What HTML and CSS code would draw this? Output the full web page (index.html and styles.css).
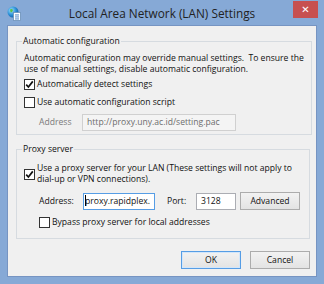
FILE: index.html
```html
<!DOCTYPE html>
<html>
<head>
<meta charset="utf-8">
<link rel="stylesheet" href="styles.css">
</head>
<body>
<div class="window">
  <div class="titlebar">
    <div class="tb-left">
      <svg class="appicon" width="14" height="15" viewBox="0 0 14 15">
        <defs>
          <radialGradient id="g" cx="0.35" cy="0.35" r="0.7">
            <stop offset="0" stop-color="#9fe0ff"/>
            <stop offset="0.6" stop-color="#2a8fd6"/>
            <stop offset="1" stop-color="#1560a8"/>
          </radialGradient>
        </defs>
        <circle cx="6" cy="6" r="5.5" fill="url(#g)"/>
        <path d="M3 3.5 Q5 2.5 6 4 Q5.5 6 4 6.5 Q3 5.5 3 3.5Z M7 7 Q9 6.5 9.5 8.5 Q8 10.5 6.5 10 Z" fill="#5cc04a"/>
        <rect x="6.5" y="6.5" width="7" height="8" fill="#ffffff" stroke="#6a8fb8" stroke-width="0.8"/>
        <rect x="8" y="8.5" width="4" height="0.9" fill="#3a78c0"/>
        <rect x="8" y="10.5" width="4" height="0.9" fill="#3a78c0"/>
        <rect x="8" y="12.5" width="4" height="0.9" fill="#3a78c0"/>
      </svg>
    </div>
    <div class="title">Local Area Network (LAN) Settings</div>
    <div class="tb-right"><div class="close">&#x2715;</div></div>
  </div>
  <div class="client">
    <fieldset class="group g1">
      <legend>Automatic configuration</legend>
      <p class="para">Automatic configuration may override manual settings.&nbsp; To ensure the<br>use of manual settings, disable automatic configuration.</p>
      <label class="check r1"><span class="box"><svg width="9" height="9" viewBox="0 0 9 9"><path d="M1.2 4.6 L3.4 7 L7.8 1.4" fill="none" stroke="#111" stroke-width="1.7"/></svg></span><span>Automatically detect settings</span></label>
      <label class="check r2"><span class="box"></span><span>Use automatic configuration script</span></label>
      <div class="addr-row">
        <span class="dim-label">Address</span>
        <span class="field disabled wide">http://proxy.uny.ac.id/setting.pac</span>
      </div>
    </fieldset>
    <fieldset class="group g2">
      <legend>Proxy server</legend>
      <label class="check multi"><span class="box"><svg width="9" height="9" viewBox="0 0 9 9"><path d="M1.2 4.6 L3.4 7 L7.8 1.4" fill="none" stroke="#111" stroke-width="1.7"/></svg></span><span>Use a proxy server for your LAN (These settings will not apply to<br>dial-up or VPN connections).</span></label>
      <div class="proxy-row">
        <span class="lbl-addr">Address:</span>
        <span class="field focus addr"><span class="caret"></span>proxy.rapidplex.</span>
        <span class="lbl-port">Port:</span>
        <span class="field port">3128</span>
        <span class="btn adv">Advanced</span>
      </div>
      <label class="check bypass"><span class="box"></span><span>Bypass proxy server for local addresses</span></label>
    </fieldset>
    <div class="actions">
      <span class="btn default">OK</span>
      <span class="btn">Cancel</span>
    </div>
  </div>
</div>
</body>
</html>
```

FILE: styles.css
```css
html, body {
  margin: 0;
  padding: 0;
}
body {
  font-family: "Open Sans", "Noto Sans", sans-serif;
  font-size: 8.6px;
  line-height: 11px;
  color: #111;
}
.window {
  width: 324px;
  height: 284px;
  background: #86a9d6;
  box-sizing: border-box;
  padding-bottom: 7px;
  display: flex;
  flex-direction: column;
}
.titlebar {
  height: 25px;
  display: grid;
  grid-template-columns: 1fr auto 1fr;
  align-items: start;
}
.tb-left {
  padding: 6px 0 0 7px;
}
.appicon {
  display: block;
}
.title {
  font-size: 11.8px;
  line-height: 15px;
  padding-top: 6px;
  color: #222;
}
.tb-right {
  display: flex;
  justify-content: flex-end;
  padding: 1px 6px 0 0;
}
.close {
  width: 25px;
  height: 17px;
  background: #c75050;
  color: #fff;
  font-size: 10px;
  line-height: 17px;
  text-align: center;
  font-weight: bold;
  font-family: "DejaVu Sans", sans-serif;
}
.client {
  margin: 0 7px;
  flex: 1;
  background: #f0f0f0;
  border: 1px solid #7694c2;
  box-sizing: border-box;
  padding: 9px 6px 0 8px;
}
.group {
  margin: 0;
  border: 1px solid #d6dbe0;
  padding: 0 7px;
  width: 294px;
  box-sizing: border-box;
}
.group legend {
  padding: 0 1px;
  margin-left: -2px;
  line-height: 12px;
}
.g1 {
  padding-bottom: 3px;
}
.para {
  margin: 6px 0 0 0;
  white-space: nowrap;
}
.check {
  display: flex;
  align-items: center;
  gap: 2px;
  height: 14px;
}
.box {
  width: 11px;
  height: 11px;
  box-sizing: border-box;
  border: 1px solid #333;
  background: #fff;
  display: flex;
  align-items: center;
  justify-content: center;
  flex: none;
}
.box svg {
  display: block;
}
.r1 {
  margin-top: 2px;
}
.r2 {
  margin-top: 4px;
}
.addr-row {
  display: flex;
  align-items: center;
  margin-top: 5px;
  padding-left: 15px;
}
.dim-label {
  color: #7a7a7a;
  width: 43px;
}
.field {
  box-sizing: border-box;
  height: 17px;
  line-height: 15px;
  border: 1px solid #abadb3;
  background: #fff;
  padding: 0 4px;
  white-space: nowrap;
  overflow: hidden;
}
.field.disabled {
  background: #f4f4f4;
  border-color: #d0d0d0;
  color: #6d6d6d;
}
.wide {
  width: 154px;
}
.g2 {
  margin-top: 8px;
  padding-bottom: 9px;
}
.multi {
  height: auto;
  margin-top: 8px;
}
.proxy-row {
  display: flex;
  align-items: center;
  margin-top: 7px;
  padding-left: 15px;
}
.lbl-addr {
  width: 44px;
}
.field.focus {
  border-color: #569de5;
}
.addr {
  width: 72px;
  padding-left: 1px;
}
.caret {
  display: inline-block;
  width: 1px;
  height: 11px;
  background: #000;
  vertical-align: -2px;
  margin-right: -1px;
}
.lbl-port {
  margin-left: 12px;
  width: 29px;
}
.port {
  width: 40px;
  padding-left: 4px;
}
.btn {
  box-sizing: border-box;
  height: 18px;
  width: 60px;
  border: 1px solid #acacac;
  background: linear-gradient(#f2f2f2, #e3e3e3);
  text-align: center;
  line-height: 16px;
  flex: none;
}
.adv {
  margin-left: 4px;
}
.bypass {
  margin-top: 5px;
  padding-left: 15px;
}
.actions {
  display: flex;
  justify-content: flex-end;
  gap: 9px;
  margin-top: 12px;
  padding-right: 0;
}
.btn.default {
  border-color: #569de5;
  box-shadow: inset 0 0 0 1px #d2e6fa;
}
```
